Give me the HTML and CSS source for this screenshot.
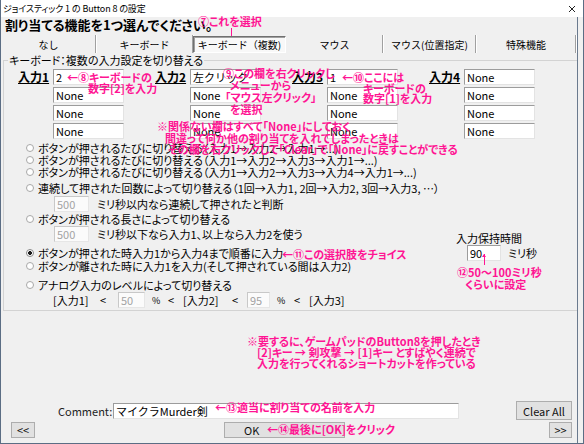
FILE: index.html
```html
<!DOCTYPE html>
<html lang="ja">
<head>
<meta charset="utf-8">
<title>ジョイスティック 1 の Button 8 の設定</title>
<link rel="stylesheet" href="styles.css">
</head>
<body>
<div class="win">
  <div class="titlebar">
    <span class="title">ジョイスティック 1 の Button 8 の設定</span>
    <svg class="close" width="8" height="8" viewBox="0 0 8 8"><path d="M1 1L7 7M7 1L1 7" stroke="#222" stroke-width="1"/></svg>
  </div>
  <div class="client">
    <div class="heading">割り当てる機能を1つ選んでください。</div>
    <div class="tabs">
      <div class="tab">なし</div>
      <div class="tab">キーボード</div>
      <div class="tab selected">キーボード（複数)</div>
      <div class="tab">マウス</div>
      <div class="tab">マウス(位置指定)</div>
      <div class="tab">特殊機能</div>
    </div>

    <div class="group">
      <div class="legend">キーボード：複数の入力設定を切り替える</div>
      <div class="inputs">
        <div class="col">
          <span class="lbl">入力1</span>
          <div class="fields"><div class="tb">2</div><div class="tb">None</div><div class="tb">None</div><div class="tb">None</div></div>
        </div>
        <div class="col">
          <span class="lbl">入力2</span>
          <div class="fields"><div class="tb">左クリック</div><div class="tb">None</div><div class="tb">None</div><div class="tb">None</div></div>
        </div>
        <div class="col">
          <span class="lbl">入力3</span>
          <div class="fields"><div class="tb">1</div><div class="tb">None</div><div class="tb">None</div><div class="tb">None</div></div>
        </div>
        <div class="col">
          <span class="lbl">入力4</span>
          <div class="fields"><div class="tb">None</div><div class="tb">None</div><div class="tb">None</div><div class="tb">None</div></div>
        </div>
      </div>

      <div class="options">
        <div class="radios">
          <div class="row"><span class="radio"></span>ボタンが押されるたびに切り替える（入力1→入力2→入力1→...)</div>
          <div class="row"><span class="radio"></span>ボタンが押されるたびに切り替える（入力1→入力2→入力3→入力1→...)</div>
          <div class="row"><span class="radio"></span>ボタンが押されるたびに切り替える（入力1→入力2→入力3→入力4→入力1→...)</div>
          <div class="row gap4"><span class="radio"></span>連続して押された回数によって切り替える（1回→入力1, 2回→入力2, 3回→入力3, …）</div>
          <div class="sub gap2"><div class="tb dis">500</div><span class="subtxt">ミリ秒以内なら連続して押されたと判断</span></div>
          <div class="row gap1"><span class="radio"></span>ボタンが押される長さによって切り替える</div>
          <div class="sub gap1"><div class="tb dis">500</div><span class="subtxt">ミリ秒以下なら入力1、以上なら入力2を使う</span></div>
          <div class="row gap5"><span class="radio on"></span>ボタンが押された時入力1から入力4まで順番に入力</div>
          <div class="row gap1"><span class="radio"></span>ボタンが離された時に入力1を入力(そして押されている間は入力2)</div>
          <div class="row gap7"><span class="radio"></span>アナログ入力のレベルによって切り替える</div>
          <div class="levels gap1">
            <span>[入力1]</span><span>&lt;</span><div class="tb dis">50</div><span class="pct">%</span><span>&lt;</span><span>[入力2]</span><span>&lt;</span><div class="tb dis">95</div><span class="pct">%</span><span>&lt;</span><span>[入力3]</span>
          </div>
        </div>
        <div class="hold">
          <div class="hold-label">入力保持時間</div>
          <div class="hold-row"><div class="tb hold-tb">90</div><span class="hold-unit">ミリ秒</span></div>
        </div>
      </div>
    </div>

    <div class="spacer"></div>

    <div class="comment-row">
      <span class="comment-label">Comment:</span>
      <div class="tb comment-tb">マイクラMurder剣</div>
      <div class="btn clear-btn">Clear All</div>
    </div>
    <div class="bottom-row">
      <div class="btn prev-btn">&lt;&lt;</div>
      <div class="btn ok-btn">OK</div>
      <div class="btn next-btn">&gt;&gt;</div>
    </div>
  </div>

  <!-- annotations -->
  <div class="note n7">⑦これを選択</div>
  <div class="pin pin7"></div>
  <div class="note n8"><span class="ln">←⑧キーボードの</span><span class="ln in21">数字[2]を入力</span></div>
  <div class="note n9"><span class="ln">⑨この欄を右クリックし</span><span class="ln in7">メニューから</span><span class="ln in2">「マウス左クリック」</span><span class="ln in7">を選択</span></div>
  <div class="note n10"><span class="ln">←⑩ここには</span><span class="ln in21">キーボードの</span><span class="ln in21">数字[1]を入力</span></div>
  <div class="note nwarn"><span class="ln">※関係ない欄はすべて「None」にしておく</span><span class="ln in8">間違って何か他の割り当てを入れてしまったときは</span><span class="ln in11">その欄を右クリックして「Clear」で「None」に戻すことができる</span></div>
  <div class="note n11">←⑪この選択肢をチョイス</div>
  <div class="pin pin12"></div>
  <div class="note n12"><span class="ln">⑫50～100ミリ秒</span><span class="ln in8">くらいに設定</span></div>
  <div class="note nsum"><span class="ln">※要するに、ゲームパッドのButton8を押したとき</span><span class="ln in10">[2]キー → 剣攻撃 → [1]キー とすばやく連続で</span><span class="ln in10">入力を行ってくれるショートカットを作っている</span></div>
  <div class="note n13">←⑬適当に割り当ての名前を入力</div>
  <div class="note n14">←⑭最後に[OK]をクリック</div>
</div>
</body>
</html>
```

FILE: styles.css
```css
* { box-sizing: border-box; }
html, body { margin: 0; padding: 0; }
body {
  width: 584px;
  height: 444px;
  overflow: hidden;
  background: #ffffff;
  font-family: "Noto Sans CJK JP", "Noto Sans", sans-serif;
  font-size: 11px;
  color: #000;
  font-feature-settings: "palt";
}

.win {
  position: relative;
  width: 584px;
  height: 444px;
  background: #f0f0f0;
  border: 1px solid #5b6d84;
  border-top: none;
  display: flex;
  flex-direction: column;
}

/* title bar */
.titlebar {
  height: 17px;
  background: #ffffff;
  display: flex;
  align-items: center;
  justify-content: space-between;
  padding: 0 7px 0 2px;
}
.title { font-size: 9px; letter-spacing: -0.1px; color: #000; }
.close { display: block; }

/* client */
.client {
  flex: 1;
  display: flex;
  flex-direction: column;
  margin-right: 5px;
  border-right: 1px solid #6a7a8e;
  padding-bottom: 5px;
}
.heading {
  height: 16px;
  line-height: 16px;
  padding-left: 4px;
  font-size: 13px;
  font-weight: bold;
}

/* tabs */
.tabs {
  display: grid;
  grid-template-columns: 95px 97px 93px 97px 93px 100px;
  height: 17px;
  margin-top: 2px;
}
.tab {
  position: relative;
  display: flex;
  align-items: center;
  justify-content: center;
  font-size: 10px;
  font-feature-settings: normal;
}
.tab::after {
  content: "";
  position: absolute;
  right: 0;
  top: 0;
  bottom: 0;
  width: 1px;
  background: #a0a0a0;
  box-shadow: 1px 0 0 #ffffff;
}
.tab.selected {
  margin-top: 1px;
  border: 1px solid #ffffff;
  border-top-color: #707070;
  border-left-color: #707070;
  box-shadow: inset 1px 1px 0 #a0a0a0;
  background: #f8f8f8;
}
.tab.selected::after { display: none; }

/* group box */
.group {
  margin: 8px 0 0 2px;
  border: 1px solid #d3d3d3;
  border-right: none;
  padding: 0 0 2px 0;
}
.legend {
  width: max-content;
  height: 13px;
  line-height: 13px;
  margin: -7px 0 0 4px;
  padding: 0 1px;
  background: #f0f0f0;
}

.inputs {
  display: flex;
  margin-top: 2px;
  padding-left: 14px;
}
.col { width: 137px; display: flex; }
.col:last-child { width: auto; }
.lbl {
  width: 35px;
  height: 16px;
  line-height: 16px;
  font-size: 12px;
  font-weight: bold;
  text-decoration: underline;
}
.fields {
  width: 71px;
  display: flex;
  flex-direction: column;
  gap: 2px;
}

.tb {
  height: 16px;
  line-height: 14px;
  background: #ffffff;
  border: 1px solid;
  border-color: #9c9c9c #e3e3e3 #e3e3e3 #9c9c9c;
  padding-left: 2px;
  font-size: 11px;
  white-space: nowrap;
  overflow: hidden;
  font-feature-settings: normal;
}
.tb.dis {
  color: #a3a3a3;
  background: #fbfbfb;
  border-color: #c8c8c8 #e6e6e6 #e6e6e6 #c8c8c8;
}

/* options */
.options {
  display: flex;
  margin-top: 3px;
  padding-left: 22px;
}
.radios {
  flex: 0 0 430px;
  display: flex;
  flex-direction: column;
  white-space: nowrap;
}
.row {
  height: 12px;
  line-height: 12px;
  display: flex;
  align-items: center;
}
.radio {
  flex: none;
  width: 8px;
  height: 8px;
  border-radius: 50%;
  border: 1px solid #a8a8a8;
  background: #ffffff;
  margin-right: 4px;
}
.radio.on {
  background: radial-gradient(circle, #1a1a1a 0 1.6px, #ffffff 2.2px);
  border-color: #8a8a8a;
}
.sub {
  height: 16px;
  display: flex;
  align-items: center;
  padding-left: 28px;
}
.sub .tb { width: 35px; }
.subtxt { margin-left: 8px; }

.gap1 { margin-top: 1px; }
.gap2 { margin-top: 2px; }
.gap4 { margin-top: 4px; }
.gap5 { margin-top: 5px; }
.gap7 { margin-top: 7px; }

.levels {
  height: 16px;
  display: grid;
  grid-template-columns: 47px 18px 27px 23px 15px 49px 15px 23px 24px 15px auto;
  align-items: center;
  padding-left: 27px;
}
.levels .pct { padding-left: 7px; font-size: 9px; }

.hold { padding-top: 90px; }
.hold-label { height: 12px; line-height: 12px; }
.hold-row {
  display: flex;
  align-items: center;
  margin-top: 1px;
  padding-left: 11px;
}
.hold-tb { width: 34px; }
.hold-unit { margin-left: 7px; }

/* bottom */
.spacer { flex: 1; }
.comment-row {
  height: 19px;
  display: flex;
  align-items: center;
  padding: 0 5px 0 57px;
}
.comment-label { width: 55px; font-size: 11px; color: #222; }
.comment-tb { width: 346px; font-size: 11px; }
.btn {
  display: flex;
  align-items: center;
  justify-content: center;
  background: #e1e1e1;
  border: 1px solid #adadad;
  font-size: 11px;
  color: #111;
}
.clear-btn { margin-left: auto; width: 56px; height: 19px; }
.bottom-row {
  height: 16px;
  margin-top: 2px;
  display: flex;
  padding: 0 5px 0 10px;
}
.prev-btn { width: 24px; }
.ok-btn { width: 121px; margin-left: 189px; justify-content: flex-start; padding-left: 19px; }
.next-btn { width: 23px; margin-left: auto; }

/* annotations (overlaid on the dialog) */
.note {
  position: absolute;
  color: #ff1493;
  font-weight: bold;
  font-size: 11px;
  line-height: 11px;
  white-space: nowrap;
}
.note .ln { display: block; }
.in2 { padding-left: 2px; }
.in7 { padding-left: 7px; }
.in8 { padding-left: 8px; }
.in10 { padding-left: 10px; }
.in11 { padding-left: 11px; }
.in21 { padding-left: 21px; }

.pin { position: absolute; width: 1px; background: #ff1493; }
.pin7 { left: 230px; top: 28px; height: 8px; }
.pin12 { left: 483px; top: 254px; height: 11px; }
.pin12::before {
  content: "";
  position: absolute;
  left: -2px;
  top: 0;
  border: 2.5px solid transparent;
  border-bottom: 3px solid #ff1493;
  border-top: 0;
}

.n7 { left: 197px; top: 16px; }
.n8 { left: 66px; top: 72px; line-height: 10.5px; }
.n9 { left: 222px; top: 67px; line-height: 12px; }
.n10 { left: 341px; top: 72px; line-height: 10.5px; }
.nwarn { left: 156px; top: 121px; line-height: 11.5px; }
.n11 { left: 281px; top: 249px; }
.n12 { left: 456px; top: 266px; line-height: 12px; }
.nsum { left: 246px; top: 336px; }
.n13 { left: 214px; top: 402px; }
.n14 { left: 266px; top: 424px; }
```
